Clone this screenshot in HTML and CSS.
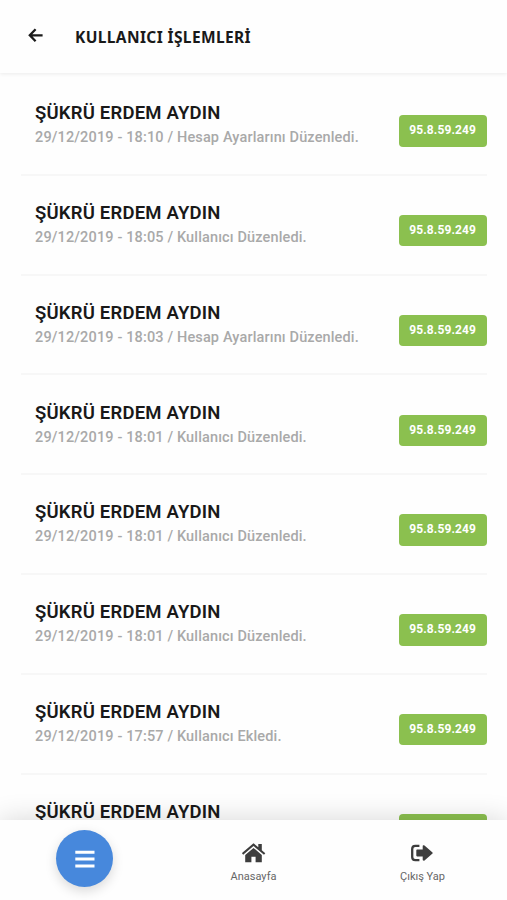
FILE: index.html
```
<!DOCTYPE html>
<html lang="tr">
<head>
  <meta charset="UTF-8" />
  <meta name="viewport" content="width=device-width, initial-scale=1.0" />
  <title>Kullanıcı İşlemleri</title>
  <link rel="stylesheet" href="styles.css">
</head>
<body>
  <header class="topbar">
    <a class="back" href="#" aria-label="Geri">
      <svg width="15" height="15" viewBox="0 0 15 15" fill="none" stroke="#1b1b1b" stroke-width="2.3"><path d="M7.6 1.3 1.8 7.3l5.8 6M2 7.3h12.6" /></svg>
    </a>
    <h1>KULLANICI İŞLEMLERİ</h1>
  </header>

  <main class="list">
    <div class="item">
      <div class="info">
        <h2>ŞÜKRÜ ERDEM AYDIN</h2>
        <p>29/12/2019 - 18:10 / Hesap Ayarlarını Düzenledi.</p>
      </div>
      <span class="ip">95.8.59.249</span>
    </div>
    <div class="item">
      <div class="info">
        <h2>ŞÜKRÜ ERDEM AYDIN</h2>
        <p>29/12/2019 - 18:05 / Kullanıcı Düzenledi.</p>
      </div>
      <span class="ip">95.8.59.249</span>
    </div>
    <div class="item">
      <div class="info">
        <h2>ŞÜKRÜ ERDEM AYDIN</h2>
        <p>29/12/2019 - 18:03 / Hesap Ayarlarını Düzenledi.</p>
      </div>
      <span class="ip">95.8.59.249</span>
    </div>
    <div class="item">
      <div class="info">
        <h2>ŞÜKRÜ ERDEM AYDIN</h2>
        <p>29/12/2019 - 18:01 / Kullanıcı Düzenledi.</p>
      </div>
      <span class="ip">95.8.59.249</span>
    </div>
    <div class="item">
      <div class="info">
        <h2>ŞÜKRÜ ERDEM AYDIN</h2>
        <p>29/12/2019 - 18:01 / Kullanıcı Düzenledi.</p>
      </div>
      <span class="ip">95.8.59.249</span>
    </div>
    <div class="item">
      <div class="info">
        <h2>ŞÜKRÜ ERDEM AYDIN</h2>
        <p>29/12/2019 - 18:01 / Kullanıcı Düzenledi.</p>
      </div>
      <span class="ip">95.8.59.249</span>
    </div>
    <div class="item">
      <div class="info">
        <h2>ŞÜKRÜ ERDEM AYDIN</h2>
        <p>29/12/2019 - 17:57 / Kullanıcı Ekledi.</p>
      </div>
      <span class="ip">95.8.59.249</span>
    </div>
    <div class="item">
      <div class="info">
        <h2>ŞÜKRÜ ERDEM AYDIN</h2>
      </div>
      <span class="ip"></span>
    </div>
  </main>

  <nav class="bottombar">
    <div class="tab">
      <a class="menu" href="#" aria-label="Menü">
        <svg width="20" height="18" viewBox="0 0 20 18" fill="#fff"><path d="M.3.8h19.2v3H.3zM.3 7.6h19.2v3H.3zM.3 14.4h19.2v3H.3z" /></svg>
      </a>
    </div>
    <a class="tab" href="#">
      <svg width="24" height="20" viewBox="0 0 24 20" fill="#3d3d3d"><path d="M11.5.2 16.3 4.3V1.1h3.5v6.2l3.5 2.9-1.3 1.6L11.5 3 1.2 11.8-.1 10.2z" /><path d="m11.5 4.9 8.3 7v7.3h-6.2v-5.4H9.4v5.4H3.2v-7.3z" /></svg>
      <span>Anasayfa</span>
    </a>
    <a class="tab" href="#">
      <svg width="24" height="20" viewBox="0 0 24 20"><path d="M8.4 2.9H4.3Q1.2 2.9 1.2 6v8q0 3.1 3.1 3.1h4.1" fill="none" stroke="#3d3d3d" stroke-width="2.3" /><path d="M12.3 2.3q.6-.3 1.2.2l8 6.9q.5.6 0 1.1l-8 6.9q-.6.5-1.2.2-.6-.2-.6-.9v-3.3H6.1q-.8 0-.8-.8V7.4q0-.8.8-.8h5.6V3.2q0-.7.6-.9z" fill="#3d3d3d" /></svg>
      <span>Çıkış Yap</span>
    </a>
  </nav>
</body>
</html>
```
FILE: styles.css
```
body {
  margin: 0;
  height: 900px;
  display: flex;
  flex-direction: column;
  overflow: hidden;
  background: #fefefe;
  font-family: Roboto, sans-serif;
  color: #191919;
}
a {
  color: inherit;
  text-decoration: none;
}
.topbar {
  display: flex;
  align-items: center;
  flex: none;
  height: 73px;
  box-shadow: 0 1px 4px rgba(0, 0, 0, 0.08);
}
.back {
  display: flex;
  width: 47px;
  padding-left: 28px;
  margin-top: -2px;
}
.topbar h1 {
  margin: 0;
  font: 700 15.5px/20px "Noto Sans", sans-serif;
  letter-spacing: 0.38px;
  white-space: nowrap;
}
.list {
  flex: 1;
  min-height: 0;
  overflow: hidden;
  padding: 3px 20px 0 21px;
}
.item {
  display: flex;
  justify-content: space-between;
  box-sizing: border-box;
  height: 99.8px;
  padding-left: 14px;
  border-bottom: 2px solid #f7f7f7;
}
.info {
  padding-top: 25.3px;
  white-space: nowrap;
}
.info h2 {
  margin: 0;
  font-size: 18.5px;
  font-weight: 600;
  line-height: 24px;
  letter-spacing: 0.2px;
}
.info p {
  margin: 0;
  font-size: 14.5px;
  font-weight: 500;
  line-height: 25px;
  letter-spacing: 0.14px;
  color: #a9a9a9;
}
.ip {
  box-sizing: border-box;
  width: 88px;
  height: 31.5px;
  margin: 39.2px 0.4px 0 0;
  border-radius: 4px;
  background: #8bc04f;
  color: #fff;
  font-size: 12px;
  font-weight: 700;
  line-height: 31px;
  letter-spacing: 0.1px;
  text-align: center;
}
.bottombar {
  position: relative;
  display: flex;
  flex: none;
  height: 80px;
  background: #fefefe;
  box-shadow: 0 0 28px rgba(0, 0, 0, 0.16);
}
.tab {
  display: flex;
  flex: 1;
  flex-direction: column;
  align-items: center;
  padding-top: 23px;
  font-size: 11px;
  line-height: 14px;
  color: #666;
}
.tab span {
  margin-top: 7px;
}
.menu {
  display: flex;
  align-items: center;
  justify-content: center;
  width: 57px;
  height: 57px;
  margin-top: -13px;
  border-radius: 50%;
  background: #4788dc;
  box-shadow: 0 4px 12px rgba(0, 0, 0, 0.15);
}
```
